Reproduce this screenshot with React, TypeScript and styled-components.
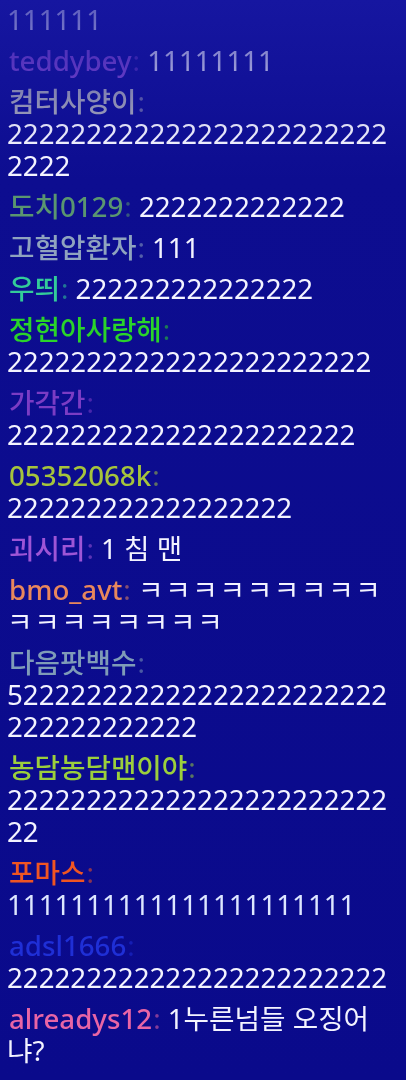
import React from "react";
import styled, { createGlobalStyle } from "styled-components";

const GlobalStyle = createGlobalStyle`
  html, body {
    margin: 0;
    padding: 0;
    background: #0a0a8a;
  }
  #root {
    height: 100vh;
  }
`;

const Screen = styled.div`
  height: 100vh;
  overflow: hidden;
  background: linear-gradient(to bottom, #1616a0 0px, #0d0d90 180px, #0a0a8b 100%);
`;

const ChatList = styled.div`
  height: 100%;
  box-sizing: border-box;
  display: flex;
  flex-direction: column;
  justify-content: flex-end;
  gap: 9px;
  padding: 0 14px 14px 7px;
  -webkit-mask-image: linear-gradient(
    to bottom,
    rgba(0, 0, 0, 0.3) 0px,
    rgba(0, 0, 0, 0.55) 60px,
    rgba(0, 0, 0, 0.85) 110px,
    #000 150px
  );
  mask-image: linear-gradient(
    to bottom,
    rgba(0, 0, 0, 0.3) 0px,
    rgba(0, 0, 0, 0.55) 60px,
    rgba(0, 0, 0, 0.85) 110px,
    #000 150px
  );
`;

const Message = styled.div`
  font-family: "Noto Sans", "Noto Sans CJK KR", sans-serif;
  font-size: 27.7px;
  line-height: 32px;
  color: #f3f3ff;
  overflow-wrap: break-word;
  flex-shrink: 0;
`;

const Name = styled.span<{ $color: string }>`
  color: ${(p) => p.$color};
  font-weight: 500;
  padding-left: 2px;
`;

const Colon = styled.span<{ $color: string }>`
  color: ${(p) => p.$color};
  opacity: 0.55;
  padding-left: 1px;
`;

const Text = styled.span<{ $tint?: string; $spacing?: number }>`
  color: ${(p) => p.$tint || "#f3f3ff"};
  letter-spacing: ${(p) => (p.$spacing ? `${p.$spacing}px` : "normal")};
`;

type Msg = {
  name?: string;
  color?: string;
  text: string;
  tint?: string;
  spacing?: number;
};

const messages: Msg[] = [
  { text: "111111" },
  { name: "teddybey", color: "#8a4fd8", text: "11111111" },
  { name: "컴터사양이", color: "#a9aabb", text: "2".repeat(28) },
  { name: "도치0129", color: "#5a9670", text: "2".repeat(13) },
  { name: "고혈압환자", color: "#8fa3bf", text: "111" },
  { name: "우띄", color: "#33cc99", text: "2".repeat(15) },
  { name: "정현아사랑해", color: "#2ad42a", text: "2".repeat(23) },
  { name: "가각간", color: "#7b3cc4", text: "2".repeat(22) },
  { name: "05352068k", color: "#a6c43c", text: "2".repeat(18) },
  { name: "괴시리", color: "#9e55d6", text: "1 침 맨" },
  { name: "bmo_avt", color: "#e8875c", text: "ㅋ".repeat(17), spacing: 1.7 },
  { name: "다음팟백수", color: "#7f9bb8", text: "5" + "2".repeat(35) },
  { name: "농담농담맨이야", color: "#9ccf3c", text: "2".repeat(26) },
  { name: "포마스", color: "#f05522", text: "1".repeat(22), tint: "#dde6ff" },
  { name: "adsl1666", color: "#1f2fd6", text: "2".repeat(24) },
  { name: "alreadys12", color: "#e865a5", text: "1누른넘들 오징어냐?" },
];

export default function App() {
  return (
    <>
      <GlobalStyle />
      <Screen>
        <ChatList>
          {messages.map((m, i) => (
            <Message key={i}>
              {m.name && m.color ? (
                <>
                  <Name $color={m.color}>{m.name}</Name>
                  <Colon $color={m.color}>:</Colon>{" "}
                </>
              ) : null}
              <Text $tint={m.tint} $spacing={m.spacing}>
                {m.text}
              </Text>
            </Message>
          ))}
        </ChatList>
      </Screen>
    </>
  );
}
